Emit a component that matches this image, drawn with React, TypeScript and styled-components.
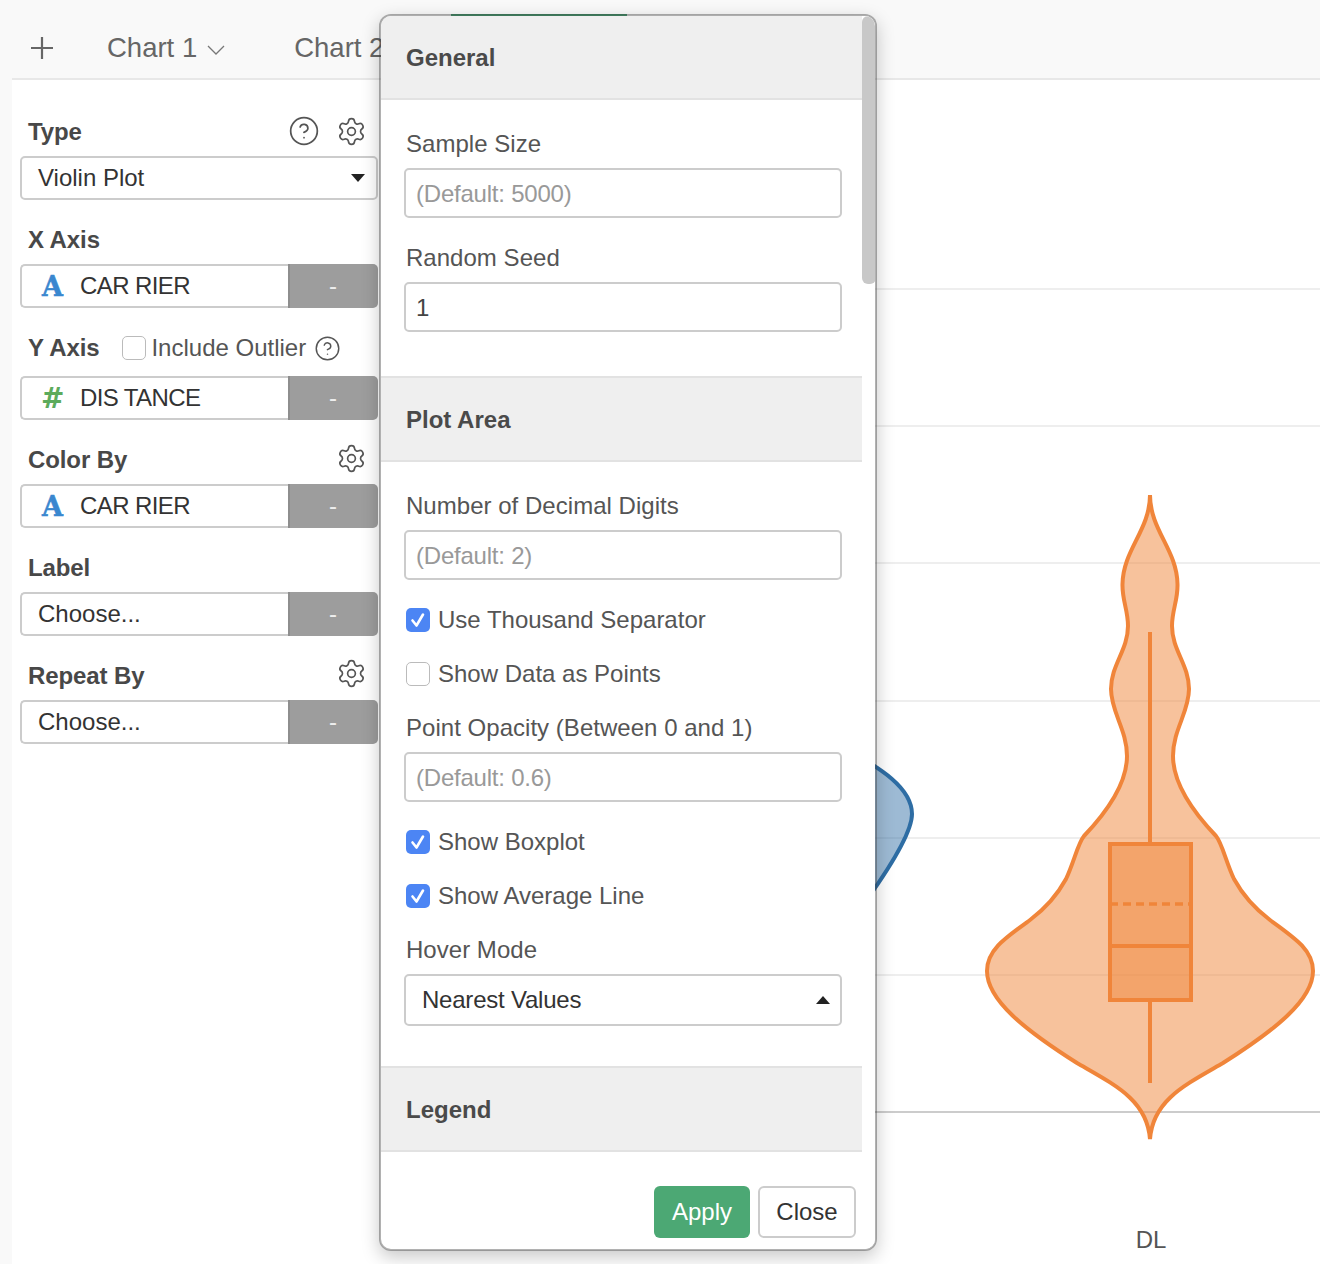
import React from "react";
import styled, { createGlobalStyle } from "styled-components";
import { Settings, CircleHelp } from "lucide-react";

const Global = createGlobalStyle`
  html, body { margin: 0; padding: 0; background: #f9f9f9; }
  * { box-sizing: border-box; }
  body { font-family: "Liberation Sans", Arial, sans-serif; }
`;

const Page = styled.div`
  position: relative;
  width: 1320px;
  height: 1264px;
  overflow: hidden;
  padding-left: 12px;
  display: flex;
  flex-direction: column;
`;
const TabBar = styled.div`
  height: 80px;
  flex: none;
  padding: 18px 0 0 19px;
  display: flex;
  align-items: center;
  border-bottom: 2px solid #e8e8e8;
  color: #666;
  font-size: 27.5px;
`;
const PlusButton = styled.svg`
  width: 22px;
  height: 22px;
  margin-right: 54px;
  flex: none;
`;
const Tab = styled.div`
  display: flex;
  align-items: center;
  gap: 10px;
  margin-right: 69px;
  white-space: nowrap;
`;
const ActiveTab = styled.div`
  align-self: stretch;
  width: 176px;
  margin: -4px 0 0 -2px;
  border-top: 2px solid #3f9f6f;
  display: flex;
  align-items: center;
  justify-content: center;
`;
const Chevron = styled.svg`
  width: 18px;
  height: 10px;
  margin-top: 3px;
`;
const Main = styled.div`
  flex: 1;
  display: flex;
  background: #fff;
  min-height: 0;
`;
const Sidebar = styled.div`
  width: 366px;
  flex: none;
  padding: 12px 0 0 8px;
`;
const LabelRow = styled.div<{ $tall?: boolean }>`
  height: ${(p) => (p.$tall ? 56 : 48)}px;
  margin-top: ${(p) => (p.$tall ? 12 : 16)}px;
  padding: 0 11px 0 8px;
  display: flex;
  align-items: center;
  gap: 16px;
`;
const SideLabel = styled.div`
  font-size: 24px;
  font-weight: 700;
  color: #484848;
  letter-spacing: -0.1px;
`;
const Spacer = styled.div`
  flex: 1;
`;
const IconSlot = styled.span<{ $lift: number }>`
  display: flex;
  margin-bottom: ${(p) => p.$lift * 2}px;
`;
const Outlier = styled.div`
  display: flex;
  align-items: center;
  margin-left: 7px;
  font-size: 24px;
  color: #555;
`;
const OutlierText = styled.span`
  margin-left: 5px;
`;
const OutlierHelp = styled.span`
  display: flex;
  margin-left: 8px;
`;
const SelectBox = styled.div`
  height: 44px;
  border: 2px solid #ccc;
  border-radius: 5px;
  background: #fff;
  display: flex;
  align-items: center;
  justify-content: space-between;
  padding: 0 11px 0 16px;
  font-size: 24px;
  color: #333;
`;
const Caret = styled.span<{ $up?: boolean }>`
  width: 0;
  height: 0;
  border-left: 7.5px solid transparent;
  border-right: 7.5px solid transparent;
  border-top: ${(p) => (p.$up ? "0" : "8px solid #222")};
  border-bottom: ${(p) => (p.$up ? "8px solid #222" : "0")};
`;
const ColumnField = styled.div`
  height: 44px;
  display: flex;
`;
const ColumnValue = styled.div<{ $plain?: boolean }>`
  flex: 1;
  border: 2px solid #ccc;
  border-right: 0;
  border-radius: 5px 0 0 5px;
  display: flex;
  align-items: center;
  padding-left: ${(p) => (p.$plain ? 16 : 20)}px;
  font-size: 24px;
  color: #333;
`;
const ColumnName = styled.span`
  letter-spacing: -0.6px;
`;
const TextGlyph = styled.span`
  width: 38px;
  font-family: "DejaVu Serif", serif;
  font-weight: 700;
  font-size: 27px;
  color: #3a87cf;
  -webkit-text-stroke: 0.5px #3a87cf;
`;
const NumberGlyph = styled.span`
  width: 38px;
  margin-left: -1px;
  margin-right: 1px;
  font-family: "DejaVu Sans", sans-serif;
  font-weight: 700;
  font-size: 28px;
  color: #5cab5c;
`;
const RemoveButton = styled.div`
  width: 90px;
  padding-right: 2px;
  border-radius: 0 5px 5px 0;
  border-left: 2px solid #8e8e8e;
  background: #9d9d9d;
  color: #eee;
  font-size: 24px;
  display: flex;
  align-items: center;
  justify-content: center;
`;
const ChartArea = styled.div`
  flex: 1;
  min-width: 0;
`;
const ChartSvg = styled.svg`
  display: block;
  width: 942px;
  height: 1184px;
`;
const AxisText = styled.text`
  font-family: "Liberation Sans", Arial, sans-serif;
  font-size: 24px;
  fill: #555;
`;

const Modal = styled.div`
  position: absolute;
  left: 379px;
  top: 14px;
  width: 498px;
  height: 1237px;
  display: flex;
  background: #fff;
  background-clip: padding-box;
  border: 2px solid rgba(60, 60, 60, 0.4);
  border-radius: 12px;
  box-shadow: 0 6px 18px rgba(0, 0, 0, 0.22);
  overflow: hidden;
`;
const ModalColumn = styled.div`
  width: 481px;
  flex: none;
  display: flex;
  flex-direction: column;
`;
const ScrollTrack = styled.div`
  width: 15px;
  flex: none;
  background: #fff;
`;
const ScrollThumb = styled.div`
  width: 14px;
  height: 268px;
  border-radius: 6px;
  background: #c8c8c8;
`;
const SectionHeader = styled.div<{ $first?: boolean }>`
  flex: none;
  height: ${(p) => (p.$first ? 84 : 86)}px;
  padding: 2px 0 0 25px;
  background: #efefef;
  border-bottom: 2px solid #e2e2e2;
  border-top: ${(p) => (p.$first ? "0" : "2px solid #e2e2e2")};
  display: flex;
  align-items: center;
  font-size: 24px;
  font-weight: 700;
  color: #4a4a4a;
`;
const SectionBody = styled.div<{ $bottom: number }>`
  padding: 30px 20px ${(p) => p.$bottom}px 23px;
  display: flex;
  flex-direction: column;
  gap: 26px;
`;
const FieldStack = styled.div`
  display: flex;
  flex-direction: column;
  gap: 10px;
`;
const FormLabel = styled.div`
  height: 28px;
  line-height: 28px;
  margin-left: 2px;
  font-size: 24px;
  letter-spacing: 0.03px;
  color: #555;
`;
const TextInput = styled.input`
  display: block;
  width: 100%;
  height: 50px;
  padding: 2px 10px 0;
  border: 2px solid #ccc;
  border-radius: 5px;
  background: #fff;
  font-family: inherit;
  font-size: 24px;
  letter-spacing: -0.22px;
  color: #444;
  outline: none;
  &::placeholder {
    color: #999;
    opacity: 1;
  }
`;
const HoverSelect = styled(SelectBox)`
  height: 52px;
  padding-right: 10px;
  letter-spacing: -0.22px;
`;
const CheckRow = styled.div`
  height: 28px;
  margin-left: 2px;
  display: flex;
  align-items: center;
  gap: 8px;
  font-size: 24px;
  color: #555;
`;
const CheckBox = styled.span<{ $on?: boolean }>`
  width: 24px;
  height: 24px;
  flex: none;
  display: flex;
  align-items: center;
  justify-content: center;
  border-radius: 5px;
  background: ${(p) => (p.$on ? "#4c85f4" : "#fff")};
  border: ${(p) => (p.$on ? "0" : "1.5px solid #bbb")};
`;
const CheckMark = styled.svg`
  width: 16px;
  height: 16px;
`;
const Footer = styled.div`
  padding: 34px 6px 0 0;
  display: flex;
  justify-content: flex-end;
  gap: 8px;
`;
const ApplyButton = styled.div`
  width: 96px;
  height: 52px;
  border-radius: 6px;
  background: #4ca874;
  color: #fff;
  font-size: 24px;
  display: flex;
  align-items: center;
  justify-content: center;
`;
const CloseButton = styled.div`
  width: 98px;
  height: 52px;
  border-radius: 6px;
  border: 2px solid #ccc;
  background: #fff;
  color: #333;
  font-size: 24px;
  display: flex;
  align-items: center;
  justify-content: center;
`;

const Gear = ({ lift }: { lift: number }) => (
  <IconSlot $lift={lift}>
    <Settings size={31} strokeWidth={1.3} color="#555" />
  </IconSlot>
);
const Help = ({ size }: { size: number }) => <CircleHelp size={size} strokeWidth={1.3} color="#555" />;

const Check = ({ on }: { on?: boolean }) => (
  <CheckBox $on={on}>
    {on && (
      <CheckMark viewBox="0 0 16 16" fill="none" stroke="#fff" strokeWidth="2.6" strokeLinecap="round" strokeLinejoin="round">
        <path d="M2.5 8.5 L6.5 13.5 L13 2.5" />
      </CheckMark>
    )}
  </CheckBox>
);

const ColumnRow = ({ kind, text }: { kind?: "text" | "number"; text: string }) => (
  <ColumnField>
    <ColumnValue $plain={!kind}>
      {kind === "text" && <TextGlyph>A</TextGlyph>}
      {kind === "number" && <NumberGlyph>#</NumberGlyph>}
      {kind ? <ColumnName>{text}</ColumnName> : text}
    </ColumnValue>
    <RemoveButton>-</RemoveButton>
  </ColumnField>
);

const gridYs = [289, 426, 563, 701, 838, 975];

// Right half of the orange violin, as dx from the centre line.
const cx = 1150;
const half: number[][] = [
  [0, 530, 27, 550, 27.5, 584],
  [28, 600, 22, 610, 22, 626],
  [22, 650, 39, 665, 39, 689],
  [39, 712, 23, 730, 23, 756],
  [23, 785, 46, 815, 66, 836],
  [72, 843, 76, 862, 84, 879],
  [90, 890, 100, 905, 120, 920],
  [145, 938, 163, 950, 163, 971],
  [163, 1000, 125, 1030, 73, 1063],
  [35, 1085, 3, 1100, 0, 1139],
];
const violinPath = () => {
  let d = `M${cx} 495`;
  half.forEach((s) => {
    d += ` C${cx + s[0]} ${s[1]} ${cx + s[2]} ${s[3]} ${cx + s[4]} ${s[5]}`;
  });
  const pts: number[][] = [[0, 495], ...half.map((s) => [s[4], s[5]])];
  for (let i = half.length - 1; i >= 0; i--) {
    const s = half[i];
    d += ` C${cx - s[2]} ${s[3]} ${cx - s[0]} ${s[1]} ${cx - pts[i][0]} ${pts[i][1]}`;
  }
  return d + " Z";
};

const Chart = () => (
  <ChartSvg viewBox="378 80 942 1184">
    {gridYs.map((y) => (
      <line key={y} x1="600" x2="1320" y1={y} y2={y} stroke="#eeeeee" strokeWidth="2" />
    ))}
    <line x1="600" x2="1320" y1="1112" y2="1112" stroke="#cccccc" strokeWidth="2" />
    <path
      d="M800 745 L840 745 C870 763 912 784 912 814 C912 830 895 860 868 898 L800 898 Z"
      fill="#2e6da4"
      fillOpacity="0.47"
      stroke="#2e6da4"
      strokeWidth="4"
    />
    <path d={violinPath()} fill="#f0853a" fillOpacity="0.5" stroke="#f0853a" strokeWidth="4" />
    <g stroke="#f0853a" strokeWidth="4" fill="none">
      <line x1={cx} x2={cx} y1="632" y2="843" />
      <line x1={cx} x2={cx} y1="1001" y2="1083" />
      <rect x="1110" y="844" width="81" height="156" fill="#f0853a" fillOpacity="0.5" />
      <line x1="1110" x2="1191" y1="946" y2="946" />
      <line x1="1110" x2="1191" y1="904" y2="904" strokeWidth="3.5" strokeDasharray="8 5" />
    </g>
    <AxisText x={cx + 1} y="1248" textAnchor="middle">DL</AxisText>
  </ChartSvg>
);

export default function App() {
  return (
    <Page>
      <Global />
      <TabBar>
        <PlusButton viewBox="0 0 22 22" stroke="#666" strokeWidth="2.2" fill="none">
          <path d="M0 11 H22 M11 0 V22" />
        </PlusButton>
        <Tab>
          Chart 1
          <Chevron viewBox="0 0 18 10" fill="none" stroke="#777" strokeWidth="1.3">
            <path d="M1 1 L9 9 L17 1" />
          </Chevron>
        </Tab>
        <Tab>Chart 2</Tab>
        <ActiveTab>Chart 3</ActiveTab>
      </TabBar>
      <Main>
        <Sidebar>
          <LabelRow>
            <SideLabel>Type</SideLabel>
            <Spacer />
            <IconSlot $lift={1}>
              <Help size={32} />
            </IconSlot>
            <Gear lift={1} />
          </LabelRow>
          <SelectBox>
            Violin Plot
            <Caret />
          </SelectBox>
          <LabelRow>
            <SideLabel>X Axis</SideLabel>
          </LabelRow>
          <ColumnRow kind="text" text="CAR RIER" />
          <LabelRow $tall>
            <SideLabel>Y Axis</SideLabel>
            <Outlier>
              <Check />
              <OutlierText>Include Outlier</OutlierText>
              <OutlierHelp>
                <Help size={27} />
              </OutlierHelp>
            </Outlier>
          </LabelRow>
          <ColumnRow kind="number" text="DIS TANCE" />
          <LabelRow>
            <SideLabel>Color By</SideLabel>
            <Spacer />
            <Gear lift={2} />
          </LabelRow>
          <ColumnRow kind="text" text="CAR RIER" />
          <LabelRow>
            <SideLabel>Label</SideLabel>
          </LabelRow>
          <ColumnRow text="Choose..." />
          <LabelRow>
            <SideLabel>Repeat By</SideLabel>
            <Spacer />
            <Gear lift={3} />
          </LabelRow>
          <ColumnRow text="Choose..." />
        </Sidebar>
        <ChartArea>
          <Chart />
        </ChartArea>
      </Main>
      <Modal>
        <ModalColumn>
          <SectionHeader $first>General</SectionHeader>
          <SectionBody $bottom={44}>
            <FieldStack>
              <FormLabel>Sample Size</FormLabel>
              <TextInput readOnly placeholder="(Default: 5000)" />
            </FieldStack>
            <FieldStack>
              <FormLabel>Random Seed</FormLabel>
              <TextInput readOnly defaultValue="1" />
            </FieldStack>
          </SectionBody>
          <SectionHeader>Plot Area</SectionHeader>
          <SectionBody $bottom={40}>
            <FieldStack>
              <FormLabel>Number of Decimal Digits</FormLabel>
              <TextInput readOnly placeholder="(Default: 2)" />
            </FieldStack>
            <CheckRow>
              <Check on />
              Use Thousand Separator
            </CheckRow>
            <CheckRow>
              <Check />
              Show Data as Points
            </CheckRow>
            <FieldStack>
              <FormLabel>Point Opacity (Between 0 and 1)</FormLabel>
              <TextInput readOnly placeholder="(Default: 0.6)" />
            </FieldStack>
            <CheckRow>
              <Check on />
              Show Boxplot
            </CheckRow>
            <CheckRow>
              <Check on />
              Show Average Line
            </CheckRow>
            <FieldStack>
              <FormLabel>Hover Mode</FormLabel>
              <HoverSelect>
                Nearest Values
                <Caret $up />
              </HoverSelect>
            </FieldStack>
          </SectionBody>
          <SectionHeader>Legend</SectionHeader>
          <Footer>
            <ApplyButton>Apply</ApplyButton>
            <CloseButton>Close</CloseButton>
          </Footer>
        </ModalColumn>
        <ScrollTrack>
          <ScrollThumb />
        </ScrollTrack>
      </Modal>
    </Page>
  );
}
